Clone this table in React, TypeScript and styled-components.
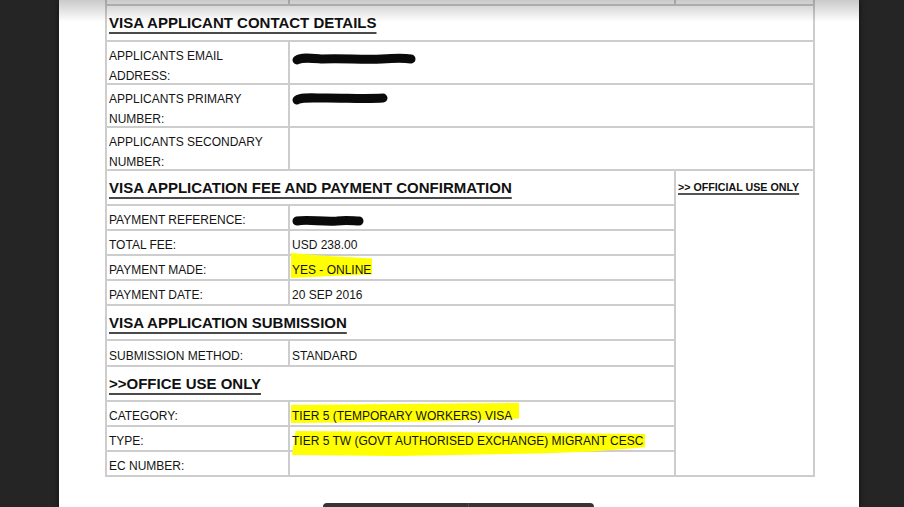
import React from "react";
import styled, { createGlobalStyle } from "styled-components";

const GlobalStyle = createGlobalStyle`
  html, body {
    margin: 0;
    padding: 0;
    background: #252525;
  }
  body {
    font-family: "Liberation Sans", Arial, sans-serif;
  }
`;

const Viewer = styled.div`
  position: relative;
  height: 507px;
  overflow: hidden;
  padding-left: 59px;
  background: #252525;
`;

const Page = styled.div`
  position: relative;
  width: 800px;
  height: 100%;
  box-sizing: border-box;
  padding-left: 46px;
  background: #fff;
  box-shadow: 0 0 6px rgba(0, 0, 0, 0.55);

  &::after {
    content: "";
    position: absolute;
    left: 0;
    right: 0;
    top: 0;
    height: 22px;
    background: linear-gradient(rgba(0, 0, 0, 0.21), rgba(0, 0, 0, 0));
    pointer-events: none;
  }
`;

const Sheet = styled.div`
  display: grid;
  grid-template-columns: 181px 384px 137px;
  grid-template-rows: 4px 34px 41px 41px 41px 33px 23px 23px 23px 23px 33px 24px 33px 23px 23px 23px;
  gap: 2px;
  width: 710px;
  box-sizing: border-box;
  padding: 0 2px 2px;
  background: #cdcdcd;
  color: #141414;
`;

const Blank = styled.div`
  background: #fff;
`;

const Head = styled.div<{ $cols: number }>`
  grid-column: 1 / span ${(p) => p.$cols};
  background: #fff;
  padding: 8px 2px 0;
`;

const HeadText = styled.span`
  font-weight: bold;
  font-size: 15px;
  color: #111;
  text-decoration: underline;
  text-decoration-thickness: 2px;
  text-underline-offset: 4px;
  text-decoration-color: #4a4a4a;
`;

const Cell = styled.div<{ $tall?: boolean; $wide?: boolean }>`
  grid-column: ${(p) => (p.$wide ? "2 / span 2" : "auto")};
  background: #fff;
  font-size: 12px;
  padding: ${(p) => (p.$tall ? "4px 2px 0" : "5px 2px 0")};
  line-height: ${(p) => (p.$tall ? "20px" : "normal")};
  display: flex;
  align-items: ${(p) => (p.$tall ? "flex-start" : "center")};
  box-sizing: border-box;
`;

const Label = styled(Cell)``;

const Side = styled.div`
  grid-column: 3;
  grid-row: 6 / span 11;
  background: #fff;
  padding: 6px 2px 0;
`;

const SideText = styled.span`
  font-weight: bold;
  font-size: 10.7px;
  color: #111;
  text-decoration: underline;
  text-decoration-thickness: 2px;
  text-underline-offset: 2px;
  text-decoration-color: #555;
`;

const Marker = styled.span<{ $t: number; $b: number; $l: number; $r: number; $clip: string }>`
  position: relative;
  z-index: 0;

  &::before {
    content: "";
    position: absolute;
    z-index: -1;
    top: -${(p) => p.$t}px;
    bottom: -${(p) => p.$b}px;
    left: -${(p) => p.$l}px;
    right: -${(p) => p.$r}px;
    background: #ffff00;
    clip-path: polygon(${(p) => p.$clip});
  }
`;

const Scribble = styled.svg<{ $top: number }>`
  display: block;
  margin-top: ${(p) => p.$top}px;
  overflow: visible;
`;

const Toolbar = styled.div`
  position: absolute;
  left: 323px;
  top: 503px;
  width: 271px;
  height: 30px;
  display: flex;
  background: #353535;
  border-radius: 4px 4px 0 0;
`;

const ToolGroup = styled.div<{ $w: number }>`
  width: ${(p) => p.$w}px;
  & + & {
    border-left: 1px solid #4c4c4c;
  }
`;

function Redaction({ w, h, top, d }: { w: number; h: number; top: number; d: string }) {
  return (
    <Scribble $top={top} width={w} height={h} viewBox={`0 0 ${w} ${h}`}>
      <path d={d} fill="none" stroke="#0a0a0a" strokeWidth={9} strokeLinecap="round" strokeLinejoin="round" />
    </Scribble>
  );
}

export default function App() {
  return (
    <>
      <GlobalStyle />
      <Viewer>
        <Page>
          <Sheet>
            <Blank />
            <Blank />
            <Blank />

            <Head $cols={3}>
              <HeadText>VISA APPLICANT CONTACT DETAILS</HeadText>
            </Head>

            <Label $tall>
              APPLICANTS EMAIL
              <br />
              ADDRESS:
            </Label>
            <Cell $tall $wide>
              <Redaction w={124} h={12} top={7} d="M5 7 C 10 4, 18 5, 30 6 C 50 5, 70 7, 90 6 C 105 5, 112 5, 119 6" />
            </Cell>

            <Label $tall>
              APPLICANTS PRIMARY
              <br />
              NUMBER:
            </Label>
            <Cell $tall $wide>
              <Redaction w={96} h={12} top={4} d="M5 7 C 9 4, 20 5, 35 5 C 55 5, 75 6, 91 5" />
            </Cell>

            <Label $tall>
              APPLICANTS SECONDARY
              <br />
              NUMBER:
            </Label>
            <Cell $tall $wide />

            <Head $cols={2}>
              <HeadText>VISA APPLICATION FEE AND PAYMENT CONFIRMATION</HeadText>
            </Head>
            <Side>
              <SideText>&gt;&gt; OFFICIAL USE ONLY</SideText>
            </Side>

            <Label>PAYMENT REFERENCE:</Label>
            <Cell>
              <Redaction w={72} h={10} top={1} d="M5 5 C 15 3, 30 6, 45 5 C 55 4, 62 5, 67 5" />
            </Cell>

            <Label>TOTAL FEE:</Label>
            <Cell>USD 238.00</Cell>

            <Label>PAYMENT MADE:</Label>
            <Cell>
              <Marker $t={10} $b={1} $l={1} $r={1} $clip="0 0, 45% 12%, 100% 22%, 100% 85%, 50% 92%, 0 100%">
                YES - ONLINE
              </Marker>
            </Cell>

            <Label>PAYMENT DATE:</Label>
            <Cell>20 SEP 2016</Cell>

            <Head $cols={2}>
              <HeadText>VISA APPLICATION SUBMISSION</HeadText>
            </Head>

            <Label>SUBMISSION METHOD:</Label>
            <Cell>STANDARD</Cell>

            <Head $cols={2}>
              <HeadText>&gt;&gt;OFFICE USE ONLY</HeadText>
            </Head>

            <Label>CATEGORY:</Label>
            <Cell>
              <Marker $t={6} $b={0} $l={1} $r={7} $clip="0 10%, 97% 0, 100% 0, 100% 78%, 60% 92%, 0 100%">
                TIER 5 (TEMPORARY WORKERS) VISA
              </Marker>
            </Cell>

            <Label>TYPE:</Label>
            <Cell>
              <Marker $t={3} $b={8} $l={0} $r={2} $clip="1% 0, 100% 12%, 100% 65%, 85% 82%, 70% 90%, 30% 100%, 0 96%">
                TIER 5 TW (GOVT AUTHORISED EXCHANGE) MIGRANT CESC
              </Marker>
            </Cell>

            <Label>EC NUMBER:</Label>
            <Cell />
          </Sheet>
        </Page>
        <Toolbar>
          <ToolGroup $w={146} />
          <ToolGroup $w={125} />
        </Toolbar>
      </Viewer>
    </>
  );
}
